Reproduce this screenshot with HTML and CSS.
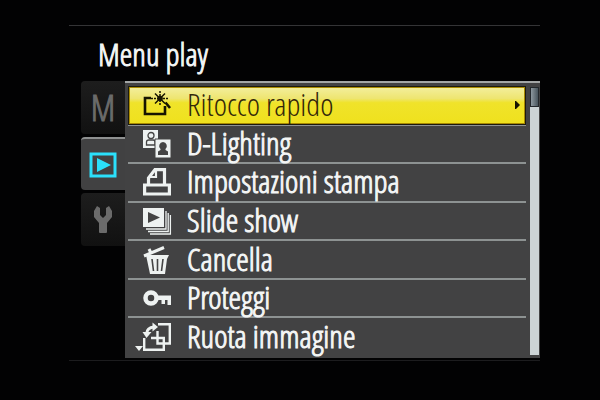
FILE: index.html
```html
<!DOCTYPE html>
<html lang="it">
<head>
  <meta charset="UTF-8" />
  <meta name="viewport" content="width=device-width, initial-scale=1.0" />
  <title>Menu play</title>
  <link rel="stylesheet" href="styles.css">
</head>
<body>
  <div class="screen">
    <h1 class="title">Menu play</h1>
    <div class="main">
      <nav class="tabs">
        <button class="tab">M</button>
        <button class="tab active" aria-label="Play">
          <svg width="28" height="26" viewBox="0 0 28 26">
            <rect x="2" y="2" width="24" height="22" fill="none" stroke="#2be0fb" stroke-width="3"/>
            <path d="M8 6L22 13L8 20Z" fill="#2be0fb"/>
          </svg>
        </button>
        <button class="tab" aria-label="Setup">
          <svg width="20" height="28" viewBox="0 0 20 28">
            <path d="M4 0L7 2V9L10 12L13 9V2L16 0L19 5V11L14 17V26Q14 27 13 27H7Q6 27 6 26V17L1 11V5Z" fill="#6b6b6b"/>
          </svg>
        </button>
      </nav>
      <div class="panel">
        <ul class="list">
          <li class="row">
            <button class="item selected">
              <svg class="icon" viewBox="0 0 28 28">
                <path d="M8 7H2V23H22V15" fill="none" stroke="#171500" stroke-width="2.6"/>
                <path d="M17 0V15M8 7.500H26" fill="none" stroke="#171500" stroke-width="1.500" stroke-dasharray="2 1"/>
                <path d="M12 2.500L22 12.500M22 2.500L12 12.500" stroke="#171500" stroke-width="1.500"/>
                <circle cx="17" cy="7.500" r="2.800" fill="#171500"/>
                <path d="M22.500 11.500L27 17" stroke="#171500" stroke-width="2.600"/>
              </svg>
              <span class="label">Ritocco rapido</span>
              <svg class="arrow" width="5" height="8" viewBox="0 0 5 8"><path d="M0 0H1L5 4L1 8H0Z" fill="#171500"/></svg>
            </button>
          </li>
          <li class="row">
            <button class="item">
              <svg class="icon" viewBox="0 0 28 28">
                <path d="M0 0H15V18H0Z" fill="#eef2f1"/>
                <circle cx="8" cy="5.500" r="3" fill="none" stroke="#444" stroke-width="1.300"/>
                <path d="M3.500 15V12Q3.500 10 6 10H10Q12 10 12 12V15Z" fill="none" stroke="#444" stroke-width="1.300"/>
                <path d="M12 9H28V28H12Z" fill="#eef2f1" stroke="#444" stroke-width="1"/>
                <path d="M20 12A4 4 0 0 1 22.500 19V20L25 21.500V25H15V21.500L17.500 20V19A4 4 0 0 1 20 12Z" fill="#444"/>
              </svg>
              <span class="label">D-Lighting</span>
            </button>
          </li>
          <li class="row">
            <button class="item">
              <svg class="icon" viewBox="0 0 28 28" fill="none" stroke="#eef2f1" stroke-width="3.200">
                <path d="M1.600 17H26.400V26H1.600Z"/>
                <path d="M5.500 17V10L12 1.600H21.500V17"/>
                <path d="M13 2V9H6" stroke-width="2.200"/>
              </svg>
              <span class="label">Impostazioni stampa</span>
            </button>
          </li>
          <li class="row">
            <button class="item">
              <svg class="icon" viewBox="0 0 28 28">
                <path d="M0 1H21V20H0Z" fill="#eef2f1"/>
                <path d="M5 5L17 10.500L5 16Z" fill="#444"/>
                <path d="M3 22H23V4M5 24.500H25.200V6M7 27H27.400V8" fill="none" stroke="#eef2f1" stroke-width="1.300"/>
              </svg>
              <span class="label">Slide show</span>
            </button>
          </li>
          <li class="row">
            <button class="item">
              <svg class="icon" viewBox="0 0 28 28">
                <path d="M3 9H26L24 13L22 28H7Z" fill="#eef2f1"/>
                <path d="M9 13L10.500 25M14.500 13V25M20 13L18.500 25" stroke="#444" stroke-width="1.600"/>
                <path d="M1 10L21 1.500M6 3L8 7" stroke="#eef2f1" stroke-width="3"/>
              </svg>
              <span class="label">Cancella</span>
            </button>
          </li>
          <li class="row">
            <button class="item">
              <svg class="icon" viewBox="0 0 28 28">
                <circle cx="8" cy="14" r="5.500" fill="none" stroke="#eef2f1" stroke-width="4.500"/>
                <path d="M14 11.500H28V21H24.500V16H22V20H18.500V16H14Z" fill="#eef2f1"/>
              </svg>
              <span class="label">Proteggi</span>
            </button>
          </li>
          <li class="row">
            <button class="item">
              <svg class="icon" viewBox="0 0 28 28" fill="none" stroke="#eef2f1" stroke-width="2.400">
                <path d="M1.200 15V26.800H20.800V15H8"/>
                <path d="M15 1.200H26.800V20.500H14.500V8"/>
                <path d="M3.500 11Q4 4.500 11 4" stroke-width="3"/>
                <path d="M9.500 -0.500L15 4L9.500 8.500Z" fill="#eef2f1" stroke="none"/>
                <path d="M-0.500 9H8.500L3.500 15Z" fill="#eef2f1" stroke="none"/>
              </svg>
              <span class="label">Ruota immagine</span>
            </button>
            <svg class="more" width="8" height="5" viewBox="0 0 8 5"><path d="M0 0H8L4 5Z" fill="#eef2f1"/></svg>
          </li>
        </ul>
        <div class="scrollbar"><div class="thumb"></div></div>
      </div>
    </div>
  </div>
</body>
</html>
```
FILE: styles.css
```css
* {
  box-sizing: border-box;
}
body {
  margin: 0;
  min-height: 100vh;
  display: flex;
  padding: 25px 10% 39px 69px;
  background-color: #020203;
  color: #f4f6f6;
  font-family: 'Open Sans Condensed Light', 'Roboto Condensed', sans-serif;
  -webkit-text-stroke: 1px;
}
.screen {
  flex: 1;
  display: flex;
  flex-direction: column;
  border-top: 1px solid #343436;
  border-bottom: 1px solid #1c1c1e;
}
.title {
  margin: 0;
  padding: 10px 29px 0;
  height: 55px;
  font-size: 32px;
  line-height: 36px;
  font-weight: normal;
}
.main {
  flex: 1;
  display: flex;
  padding: 0 0 2px 12px;
}
.tabs {
  width: 44px;
  display: flex;
  flex-direction: column;
  gap: 3px;
}
.tab {
  display: flex;
  align-items: center;
  justify-content: center;
  height: 53px;
  padding: 0;
  border: none;
  border-radius: 4px 0 0 4px;
  background: linear-gradient(to bottom, #1d1d1d, #111);
  color: #6b6b6b;
  font-family: inherit;
  font-size: 36px;
  line-height: 40px;
}
.tab.active {
  border-top: 2px solid #8e9090;
  background: #414142;
}
.panel {
  flex: 1;
  display: flex;
  gap: 4px;
  padding: 4px 1px 1px 3px;
  border-top: 2px solid #a3a6a6;
  background-color: #424243;
}
.list {
  flex: 1;
  display: flex;
  flex-direction: column;
  margin: 0;
  padding: 0;
  list-style: none;
}
.row {
  flex: 1;
  display: flex;
  position: relative;
  border-bottom: 2px solid #8d9292;
}
.row:last-child {
  border-bottom-color: transparent;
}
.item {
  flex: 1;
  display: flex;
  align-items: center;
  gap: 16px;
  padding: 0 5px 0 15px;
  border: none;
  background: none;
  color: inherit;
  font-family: inherit;
  font-size: 32px;
  line-height: 30px;
  text-align: left;
}
.item.selected {
  margin: 0 1px;
  padding: 0 4px 0 13px;
  border: 1px solid #a98b00;
  outline: 1px solid #1c1a10;
  background: linear-gradient(to bottom, #f3ee9a, #eee570 30%, #f0e32a 42%, #efe11e);
  color: #33270a;
  -webkit-text-stroke: 0;
}
.label {
  padding-bottom: 2px;
}
.icon {
  width: 28px;
  height: 28px;
  flex: none;
  overflow: visible;
}
.arrow {
  margin-left: auto;
}
.more {
  position: absolute;
  left: 7px;
  bottom: 4px;
}
.scrollbar {
  width: 9px;
  margin-bottom: 2px;
  background-color: #ccd3d5;
}
.thumb {
  height: 20px;
  border: 1px solid #23282c;
  background: linear-gradient(to right, #8d989f, #48545c);
}
```
